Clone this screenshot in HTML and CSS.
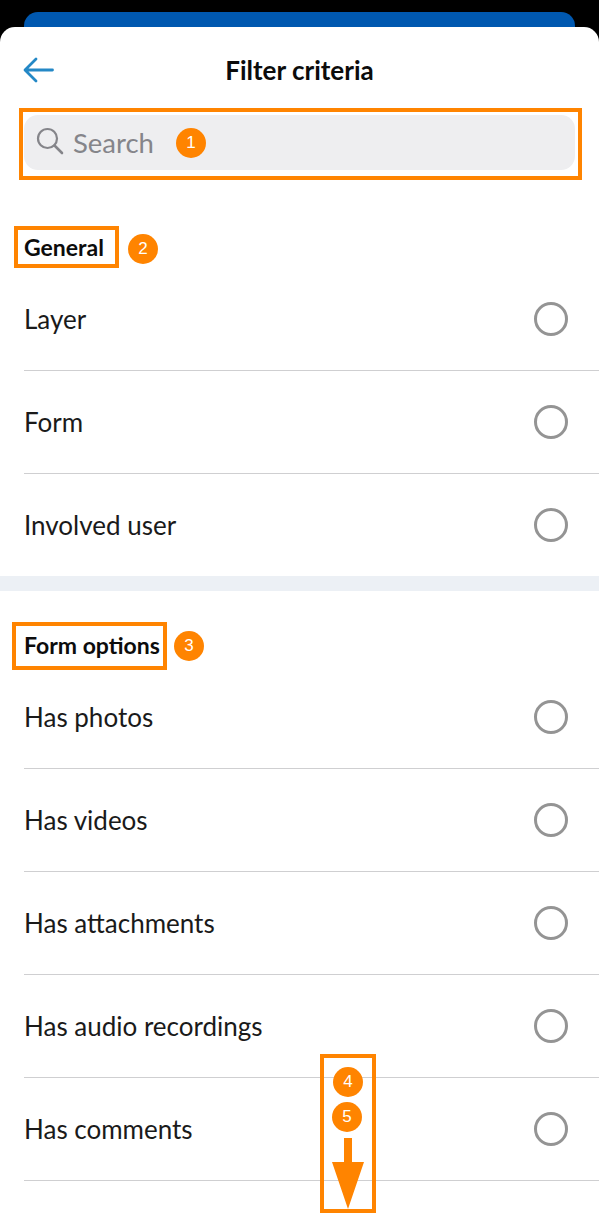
FILE: index.html
```html
<!DOCTYPE html>
<html lang="en">
<head>
<meta charset="utf-8">
<title>Filter criteria</title>
<link rel="stylesheet" href="styles.css">
</head>
<body>
<div class="screen">
  <div class="backcard"></div>
  <main class="sheet">
    <header class="header">
      <svg class="back" viewBox="0 0 32 28" width="32" height="28"><path d="M29.500 14H3M13 3 2 14l11 11" fill="none" stroke="#2488c6" stroke-width="2.800" stroke-linecap="round" stroke-linejoin="round"/></svg>
      <h1 class="title">Filter criteria</h1>
    </header>
    <div class="search">
      <svg class="search-icon" viewBox="0 0 28 28" width="28" height="28"><circle cx="11.500" cy="11.500" r="9.500" fill="none" stroke="#85858a" stroke-width="2.200"/><path d="M18.500 18.500 26 26" fill="none" stroke="#85858a" stroke-width="2.600" stroke-linecap="round"/></svg>
      <span class="search-text">Search</span>
    </div>
    <section class="section first">
      <h2 class="section-title">General</h2>
      <div class="row"><span>Layer</span><i class="radio"></i></div>
      <div class="row"><span>Form</span><i class="radio"></i></div>
      <div class="row last"><span>Involved user</span><i class="radio"></i></div>
    </section>
    <div class="divider"></div>
    <section class="section second">
      <h2 class="section-title">Form options</h2>
      <div class="row"><span>Has photos</span><i class="radio"></i></div>
      <div class="row"><span>Has videos</span><i class="radio"></i></div>
      <div class="row"><span>Has attachments</span><i class="radio"></i></div>
      <div class="row"><span>Has audio recordings</span><i class="radio"></i></div>
      <div class="row"><span>Has comments</span><i class="radio"></i></div>
    </section>
  </main>
  <div class="mark box-search"></div>
  <div class="mark box-general"></div>
  <div class="mark box-options"></div>
  <div class="mark box-scroll"></div>
  <span class="badge b1">1</span>
  <span class="badge b2">2</span>
  <span class="badge b3">3</span>
  <span class="badge b4">4</span>
  <span class="badge b5">5</span>
  <svg class="arrow" viewBox="0 0 32 72" width="32" height="72"><path d="M12 0h8v24h12L16 71 0 24h12z" fill="#ff8400"/></svg>
</div>
</body>
</html>
```
FILE: styles.css
```css
* { box-sizing: border-box; }
html, body { margin: 0; padding: 0; }
body { background: #000; font-family: Lato, "Liberation Sans", sans-serif; color: #111; }
.screen { position: relative; width: 599px; height: 1214px; overflow: hidden; background: #000; padding-top: 12px; }
.backcard { height: 40px; margin: 0 24px -25px; border-radius: 14px 14px 0 0; background: #0058b0; }
.sheet { position: relative; background: #fff; border-radius: 15px 15px 0 0; height: 1187px; }
.header { position: relative; height: 88px; display: flex; align-items: center; justify-content: center; padding-bottom: 2px; }
.back { position: absolute; left: 23px; top: 29px; }
.title { margin: 0; font-size: 26px; font-weight: 700; color: #0c0c0c; }
.search { display: flex; align-items: center; gap: 9px; height: 55px; margin: 0 24px; padding-left: 12px; border-radius: 14px; background: #eeeef0; }
.search-icon { flex: none; margin-top: -3px; }
.search-text { font-size: 27.500px; color: #85858a; }
.section { padding-left: 24px; }
.first { padding-top: 57px; }
.second { padding-top: 34px; }
.section-title { margin: 0 0 1px; height: 40px; line-height: 40px; font-size: 23px; font-weight: 700; color: #0c0c0c; }
.row { display: flex; align-items: center; justify-content: space-between; height: 103px; padding-right: 31px; border-bottom: 1.500px solid #cfcfd1; font-size: 26px; color: #1a1a1a; }
.row.last { height: 102px; border-bottom: 0; }
.radio { display: block; width: 34px; height: 34px; border: 3px solid #949494; border-radius: 50%; }
.divider { height: 15px; background: #ecf0f5; }
.mark { position: absolute; border: 4px solid #ff8400; }
.box-search { left: 19px; top: 108px; width: 563px; height: 72px; }
.box-general { left: 14px; top: 226px; width: 105px; height: 42px; }
.box-options { left: 12px; top: 622px; width: 155px; height: 48px; }
.box-scroll { left: 320px; top: 1054px; width: 56px; height: 159px; }
.badge { position: absolute; width: 30px; height: 30px; border-radius: 50%; background: #ff8400; color: #fff; font-family: "Liberation Sans", sans-serif; font-size: 17px; line-height: 30px; text-align: center; }
.b1 { left: 176px; top: 128px; }
.b2 { left: 128px; top: 234px; }
.b3 { left: 174px; top: 631px; }
.b4 { left: 333px; top: 1067px; }
.b5 { left: 332px; top: 1102px; }
.arrow { position: absolute; left: 332px; top: 1138px; }
```
